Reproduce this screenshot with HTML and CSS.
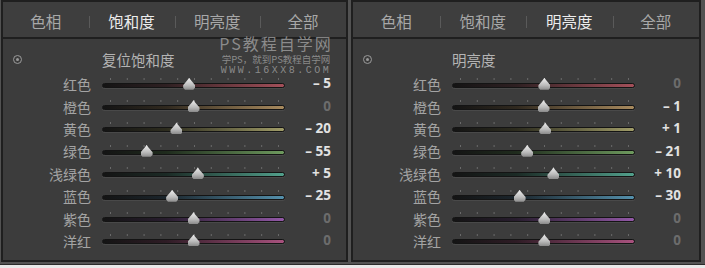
FILE: index.html
```html
<!DOCTYPE html>
<html lang="zh-CN">
<head>
    <meta charset="UTF-8">
    <title>HSL 饱和度 / 明亮度</title>
    <link rel="stylesheet" href="styles.css">
</head>
<body>

<div class="wrap">
    <!-- Left panel: 饱和度 -->
    <div class="panel panel-left">
        <div class="tabs">
            <span class="tab">色相</span>
            <span class="tab active">饱和度</span>
            <span class="tab">明亮度</span>
            <span class="tab">全部</span>
        </div>
        <div class="head">
            <span class="target"></span>
            <span class="head-title">复位饱和度</span>
        </div>
        <div class="rows">
            <div class="row"><span class="name">红色</span><div class="track red"><i class="thumb" style="left:47.6%"></i></div><span class="val">– 5</span></div>
            <div class="row"><span class="name">橙色</span><div class="track orange"><i class="thumb" style="left:50%"></i></div><span class="val zero">0</span></div>
            <div class="row"><span class="name">黄色</span><div class="track yellow"><i class="thumb" style="left:40.6%"></i></div><span class="val">– 20</span></div>
            <div class="row"><span class="name">绿色</span><div class="track green"><i class="thumb" style="left:24.1%"></i></div><span class="val">– 55</span></div>
            <div class="row"><span class="name">浅绿色</span><div class="track aqua"><i class="thumb" style="left:52.4%"></i></div><span class="val">+ 5</span></div>
            <div class="row"><span class="name">蓝色</span><div class="track blue"><i class="thumb" style="left:38.2%"></i></div><span class="val">– 25</span></div>
            <div class="row"><span class="name">紫色</span><div class="track purple"><i class="thumb" style="left:50%"></i></div><span class="val zero">0</span></div>
            <div class="row"><span class="name">洋红</span><div class="track magenta"><i class="thumb" style="left:50%"></i></div><span class="val zero">0</span></div>
        </div>

        <!-- watermark -->
        <div class="watermark">
            <div class="wm-big">PS教程自学网</div>
            <div class="wm-small">学PS，就到PS教程自学网</div>
            <div class="wm-url">WWW.16XX8.COM</div>
        </div>
    </div>

    <!-- Right panel: 明亮度 -->
    <div class="panel panel-right">
        <div class="tabs">
            <span class="tab">色相</span>
            <span class="tab">饱和度</span>
            <span class="tab active">明亮度</span>
            <span class="tab">全部</span>
        </div>
        <div class="head">
            <span class="target"></span>
            <span class="head-title">明亮度</span>
        </div>
        <div class="rows">
            <div class="row"><span class="name">红色</span><div class="track red"><i class="thumb" style="left:50.5%"></i></div><span class="val zero">0</span></div>
            <div class="row"><span class="name">橙色</span><div class="track orange"><i class="thumb" style="left:50%"></i></div><span class="val">– 1</span></div>
            <div class="row"><span class="name">黄色</span><div class="track yellow"><i class="thumb" style="left:51%"></i></div><span class="val">+ 1</span></div>
            <div class="row"><span class="name">绿色</span><div class="track green"><i class="thumb" style="left:41%"></i></div><span class="val">– 21</span></div>
            <div class="row"><span class="name">浅绿色</span><div class="track aqua"><i class="thumb" style="left:55.5%"></i></div><span class="val">+ 10</span></div>
            <div class="row"><span class="name">蓝色</span><div class="track blue"><i class="thumb" style="left:36.8%"></i></div><span class="val">– 30</span></div>
            <div class="row"><span class="name">紫色</span><div class="track purple"><i class="thumb" style="left:50.5%"></i></div><span class="val zero">0</span></div>
            <div class="row"><span class="name">洋红</span><div class="track magenta"><i class="thumb" style="left:50.5%"></i></div><span class="val zero">0</span></div>
        </div>
    </div>
</div>

</body>
</html>
```

FILE: styles.css
```css
body {
    margin: 0;
    padding: 0;
    background-color: #e8e8e8;
    font-family: "Noto Sans CJK SC", "Noto Sans", sans-serif;
}

.wrap {
    width: 705px;
    height: 265px;
    background-color: #525252;
    display: flex;
    gap: 3px;
    padding-left: 1px;
    box-sizing: border-box;
    border-bottom: 1px solid #2a2a2a;
}

/* Panel */
.panel {
    position: relative;
    height: 262px;
    box-sizing: border-box;
    background-color: #3c3c3c;
    border: 2px solid #1f1f1f;
}

.panel-left {
    width: 347px;
}

.panel-right {
    width: 350px;
}

/* Tabs */
.tabs {
    height: 37px;
    padding-top: 2px;
    box-sizing: border-box;
    display: flex;
    align-items: center;
    border-bottom: 2px solid #1f1f1f;
    background-color: #3e3e3e;
}

.tab {
    flex: 1;
    text-align: center;
    font-size: 15.5px;
    color: #a8a8a8;
    position: relative;
}

.tab + .tab::before {
    content: "";
    position: absolute;
    left: 0;
    top: 6px;
    width: 1px;
    height: 12px;
    background-color: #5a5a5a;
}

.tab.active {
    color: #ececec;
}

/* Header */
.head {
    height: 28px;
    padding-top: 6px;
    display: flex;
    align-items: center;
}

.target {
    width: 7px;
    height: 7px;
    margin-left: 10px;
    border: 1px solid #9a9a9a;
    border-radius: 50%;
    position: relative;
}

.target::after {
    content: "";
    position: absolute;
    left: 2px;
    top: 2px;
    width: 3px;
    height: 3px;
    border-radius: 50%;
    background-color: #9a9a9a;
}

.head-title {
    margin-left: 80px;
    font-size: 14.5px;
    color: #b4b4b4;
}

/* Slider rows */
.rows {
    display: flex;
    flex-direction: column;
}

.row {
    height: 22.4px;
    display: grid;
    grid-template-columns: 88px 183px 35px;
    column-gap: 11px;
    align-items: center;
}

.name {
    text-align: right;
    font-size: 14px;
    color: #a4a4a4;
    line-height: 1;
}

.val {
    text-align: right;
    font-family: "Open Sans", "Liberation Sans", sans-serif;
    font-weight: 700;
    font-size: 13.5px;
    color: #e2e2e2;
    line-height: 1;
}

.val.zero {
    color: #6c6c6c;
}

.track {
    position: relative;
    height: 3px;
    border: 1px solid #141414;
    border-radius: 3px;
    box-shadow: 0 1px 0 rgba(255, 255, 255, 0.07);
    margin-top: 2px;
}

/* tick dots above the track */
.track::before {
    content: "";
    position: absolute;
    left: 7px;
    width: 169px;
    top: -6px;
    height: 2px;
    background-image: linear-gradient(to right, #6a6a6a 1px, transparent 1px);
    background-size: 16.8px 2px;
}

.red     { background: linear-gradient(to right, #141414, #2e2022 35%, #a4505a); }
.orange  { background: linear-gradient(to right, #141414, #30291f 35%, #a88a5e); }
.yellow  { background: linear-gradient(to right, #141414, #2d2c1e 35%, #a09c68); }
.green   { background: linear-gradient(to right, #141414, #1f2b1d 35%, #6e9a5e); }
.aqua    { background: linear-gradient(to right, #141414, #1b2a25 35%, #52a08c); }
.blue    { background: linear-gradient(to right, #141414, #1b252c 35%, #5490ac); }
.purple  { background: linear-gradient(to right, #141414, #281d2e 35%, #9258a6); }
.magenta { background: linear-gradient(to right, #141414, #2e1c25 35%, #a8527e); }

.thumb {
    position: absolute;
    top: -6px;
    width: 12px;
    height: 12px;
    margin-left: -6px;
    background: linear-gradient(to bottom, #f0f0f0, #bcbcbc 60%, #8a8a8a);
    clip-path: polygon(50% 0, 62% 18%, 100% 62%, 100% 82%, 85% 100%, 15% 100%, 0 82%, 0 62%, 38% 18%);
}

/* Watermark overlay */
.watermark {
    position: absolute;
    left: 214px;
    top: 32px;
    width: 118px;
    text-align: center;
    white-space: nowrap;
    color: rgba(175, 175, 175, 0.7);
}

.wm-big {
    font-size: 16px;
    line-height: 19px;
    letter-spacing: 2px;
    font-family: "Noto Sans CJK SC", "Liberation Serif", serif;
}

.wm-small {
    font-size: 9.5px;
    line-height: 12px;
}

.wm-url {
    font-size: 10px;
    line-height: 11px;
    letter-spacing: 2.5px;
    font-family: "Liberation Mono", monospace;
}
```
